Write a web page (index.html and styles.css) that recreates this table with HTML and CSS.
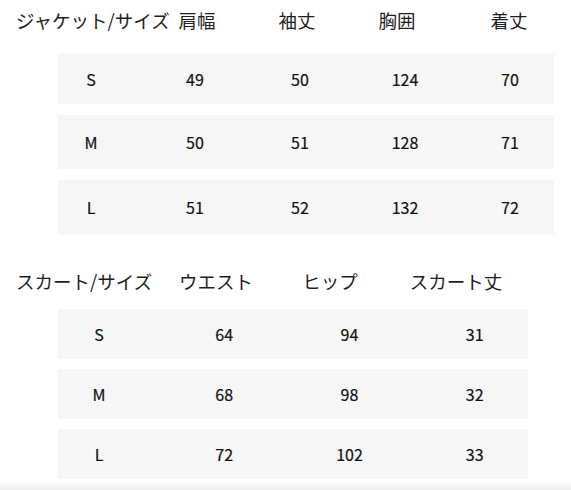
FILE: index.html
```
<!DOCTYPE html>
<html lang="ja">
<head>
<meta charset="utf-8">
<link rel="stylesheet" href="styles.css">
</head>
<body>
<main class="page">
  <section class="chart chart--jacket">
    <div class="head">
      <span class="label">ジャケット/サイズ</span>
      <span>肩幅</span>
      <span>袖丈</span>
      <span>胸囲</span>
      <span>着丈</span>
    </div>
    <div class="rows">
      <div class="row"><span class="size">S</span><span>49</span><span>50</span><span>124</span><span>70</span></div>
      <div class="row"><span class="size">M</span><span>50</span><span>51</span><span>128</span><span>71</span></div>
      <div class="row"><span class="size">L</span><span>51</span><span>52</span><span>132</span><span>72</span></div>
    </div>
  </section>
  <section class="chart chart--skirt">
    <div class="head">
      <span class="label">スカート/サイズ</span>
      <span>ウエスト</span>
      <span>ヒップ</span>
      <span>スカート丈</span>
    </div>
    <div class="rows">
      <div class="row"><span class="size">S</span><span>64</span><span>94</span><span>31</span></div>
      <div class="row"><span class="size">M</span><span>68</span><span>98</span><span>32</span></div>
      <div class="row"><span class="size">L</span><span>72</span><span>102</span><span>33</span></div>
    </div>
  </section>
  <div class="fade"></div>
</main>
</body>
</html>
```
FILE: styles.css
```
html, body {
  margin: 0;
  padding: 0;
  background: #ffffff;
}

body {
  font-family: "Noto Sans CJK JP", "Noto Sans", sans-serif;
  color: #1c1c1c;
  width: 571px;
  height: 490px;
  overflow: hidden;
}

.page {
  display: flex;
  flex-direction: column;
}

.head {
  display: grid;
  align-items: center;
  height: 40px;
  padding-left: 16px;
  font-size: 18.5px;
  font-weight: 400;
  color: #1e1e1e;
  white-space: nowrap;
}

.head span {
  text-align: center;
}

.head .label {
  text-align: left;
}

.rows {
  display: flex;
  flex-direction: column;
  margin-left: 58px;
}

.row {
  display: grid;
  align-items: center;
  background: #f6f6f6;
  font-size: 16px;
  font-weight: 400;
  color: #111;
  -webkit-text-stroke: 0.2px #111;
  white-space: nowrap;
}

.row span {
  text-align: center;
}

/* jacket */
.chart--jacket .head {
  grid-template-columns: 131px 100px 100px 100px 124px;
}

.chart--jacket .rows {
  margin-top: 14px;
  width: 496px;
  gap: 11px;
}

.chart--jacket .row {
  height: 54px;
  grid-template-columns: 84.5px repeat(4, 105px);
}

.chart--jacket .row:first-child {
  height: 50px;
}

.chart--jacket .size {
  padding-right: 18.5px;
}

/* skirt */
.chart--skirt {
  margin-top: 27px;
}

.chart--skirt .head {
  grid-template-columns: 144px 112px 116px 136px;
}

.chart--skirt .rows {
  margin-top: 8px;
  width: 470px;
  gap: 10px;
}

.chart--skirt .row {
  height: 50px;
  grid-template-columns: 103.5px repeat(3, 125.3px);
}

.chart--skirt .size {
  padding-right: 21.5px;
}

.fade {
  margin-top: 1px;
  height: 10px;
  background: linear-gradient(#ffffff, #ededed);
}
```
